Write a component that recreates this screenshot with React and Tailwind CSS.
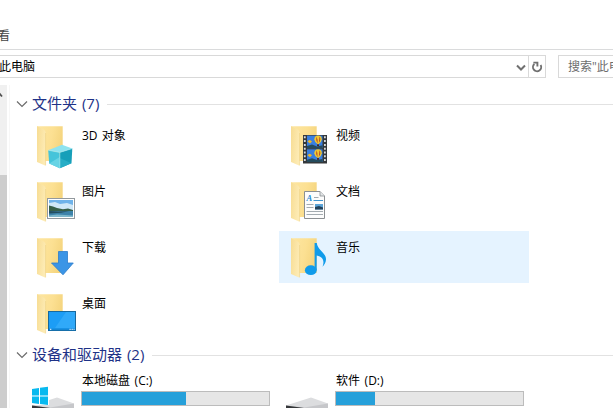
import React from 'react';

const Folder = ({ id, children }) => (
  <svg className="h-12 w-12 shrink-0" viewBox="0 0 48 48">
    <defs>
      <linearGradient id={`back-${id}`} x1="0" y1="0" x2="1" y2="0.3">
        <stop offset="0" stopColor="#fde6a2" />
        <stop offset="0.6" stopColor="#fce092" />
        <stop offset="1" stopColor="#f5d57f" />
      </linearGradient>
      <linearGradient id={`flap-${id}`} x1="0" y1="0" x2="1" y2="0.4">
        <stop offset="0" stopColor="#f7dc92" />
        <stop offset="1" stopColor="#fdebb4" />
      </linearGradient>
    </defs>
    <path d="M4 5.3H29.7V40H12L4 38Z" fill={`url(#back-${id})`} />
    <path d="M4 5.3L10.6 8.5Q12.6 9.6 12.6 11.5V44.8L4 41Z" fill={`url(#flap-${id})`} />
    <path d="M12.6 12V44.3" stroke="#ecd084" strokeWidth="0.6" />
    {children}
  </svg>
);

const Cube = () => (
  <>
    <path d="M15.2 29.2L29 23.8L39.3 27.5L26.8 31.4Z" fill="#8ee3ef" />
    <path d="M15.2 29.2L26.8 31.4V47.3L16.2 42.5Z" fill="#45c4da" />
    <path d="M26.8 31.4L39.3 27.5L38.5 42.3L26.8 47.3Z" fill="#169fb9" />
    <path d="M16.2 42.5L26.8 36V47.3Z" fill="#67d4e5" />
    <path d="M26.8 37L38.5 42.3L26.8 47.3Z" fill="#27adc6" />
    <path d="M15.2 29.2L26.8 31.4L39.3 27.5M26.8 31.4V47" fill="none" stroke="#b4f0f6" strokeWidth="0.6" />
  </>
);

const Photo = () => (
  <>
    <rect x="14.5" y="21.5" width="27" height="20" fill="#fff" stroke="#92999e" />
    <rect x="16" y="23" width="24" height="17" fill="#6fb3ea" />
    <path d="M16 26L22 25L27 27L34 26L40 28V33H16Z" fill="#cfe8f8" />
    <path d="M16 28.5L20 29.5L24 31L30 32.3L35 31.6L40 33V34.5H16Z" fill="#376049" />
    <rect x="16" y="34" width="24" height="6" fill="#3d83aa" />
    <path d="M16 34L25 34.6L36 34.3L28 35.8L16 36.4Z" fill="#244e60" />
    <path d="M16 38.6L24 37.5L40 38.5V40H16Z" fill="#7db7cb" />
  </>
);

const Arrow = () => (
  <path d="M25.5 18.5H34.5V30H40.3L30 41.8L18.5 30H25.5Z" fill="#3b95e6" stroke="#2b7ccb" strokeWidth="0.8" />
);

const Screen = () => (
  <>
    <rect x="15.5" y="22.5" width="27" height="19" fill="#1c9df6" stroke="#17699f" />
    <path d="M33 23H42V39H22Z" fill="#39aefb" opacity="0.7" />
    <rect x="16" y="39.5" width="26" height="1.7" fill="#1587d6" />
    <path d="M17 40.3H18.3M36.5 40.3H37.7M38.6 40.3H39.8M40.6 40.3H41.5" stroke="#fff" />
  </>
);

const Frame = ({ y }) => (
  <g transform={`translate(0 ${y})`}>
    <rect x="20" y="0" width="15.5" height="12.6" fill="#397fe0" />
    <path d="M20 10.4L25 9L30 10.8L35.5 9.6V12.6H20Z" fill="#244b5d" />
    <path d="M27.3 4Q27.5 0 31 0Q34.8 0 34.8 4Q34.5 6.5 31.7 8.5H30.5Q27.5 6.5 27.3 4Z" fill="#f1c92f" />
    <path d="M29.4 1Q31 3.5 30.5 8Q28.5 5 29.4 1M32.5 1Q34.5 4 31.8 7.5Z" fill="#b4472f" />
    <path d="M20.5 6Q22.5 3 25 6L23 8Z" fill="#eab72c" />
    <rect x="30" y="8.8" width="2" height="1.7" fill="#4c2722" />
  </g>
);

const Film = () => (
  <>
    <rect x="16" y="14" width="24" height="28.5" fill="#34383b" />
    <Frame y={14.6} />
    <Frame y={28.3} />
    <path d="M17.8 15.3V42M37.9 15.3V42" stroke="#d7dcdf" strokeWidth="1.8" strokeDasharray="2 1.8" />
  </>
);

const Doc = () => (
  <>
    <path d="M17.5 14.5H33L37.5 19V41.5H17.5Z" fill="#fcfcfc" stroke="#8b8f92" />
    <path d="M33 14.5V19H37.5" fill="#e2e5e7" stroke="#8b8f92" strokeWidth="0.8" />
    <text x="19.6" y="24" fontSize="8.5" fontWeight="bold" fontStyle="italic" fontFamily="Liberation Serif, serif" fill="#1f88cf">A</text>
    <path d="M27 20.5H31.5M19.5 27.5H26.5M19.5 30.5H26.5M19.5 34.5H36M19.5 37.5H36" stroke="#a3abb0" />
    <path d="M26.5 23.5H36" stroke="#3f95cf" />
    <rect x="28" y="27" width="8" height="5.5" fill="#5ba4d8" />
    <path d="M28 30L32 29L36 30.5V32.5H28Z" fill="#22415a" />
  </>
);

const Note = () => (
  <>
    <ellipse cx="23.8" cy="37.2" rx="5.9" ry="4.9" fill="#109bea" />
    <path d="M27.6 10H29.8C30.4 17.2 39.2 19.5 39 26.5C38.8 29.7 37.4 31.8 35.5 33.8C37.5 28.5 36.7 23.8 29.7 22.4V37H27.6Z" fill="#109bea" />
  </>
);

const folders = [
  { name: '3D 对象', icon: <Cube /> },
  { name: '视频', icon: <Film /> },
  { name: '图片', icon: <Photo /> },
  { name: '文档', icon: <Doc /> },
  { name: '下载', icon: <Arrow /> },
  { name: '音乐', icon: <Note />, active: true },
  { name: '桌面', icon: <Screen /> },
];

const drives = [
  { name: '本地磁盘 (C:)', used: 104, system: true },
  { name: '软件 (D:)', used: 39 },
];

const SectionHeader = ({ title }) => (
  <div className="flex h-5 items-center">
    <svg className="mr-[4px] h-3 w-3 shrink-0" viewBox="0 0 12 12" fill="none" stroke="#6c6c6c" strokeWidth="1.2">
      <path d="M1 3.5L6 8.5L11 3.5" />
    </svg>
    <h2 className="-mt-[2px] whitespace-nowrap text-[15px] leading-5 text-[#1e3287] [word-spacing:1px]">{title}</h2>
    <div className="ml-2 h-px flex-1 bg-[#e2e2e2]" />
  </div>
);

const FolderTile = ({ id, name, icon, active }) => (
  <div className={`flex h-[52px] w-[250px] pl-2 pt-[2px] ${active ? 'bg-[#e5f3ff]' : ''}`}>
    <Folder id={id}>{icon}</Folder>
    <span className="ml-px mt-[6px] text-xs leading-[18px] text-black [word-spacing:1px]">{name}</span>
  </div>
);

const DriveTile = ({ name, used, system }) => (
  <div className="flex w-[250px] pl-[7px]">
    <svg className="h-12 w-[49px] shrink-0" viewBox="0 0 49 48">
      <path d="M0 32.5L25 24.5L42 30.5V48H0Z" fill="#dcdddf" />
      <path d="M0 32.5L18 34.5L42 30.5V48H0Z" fill="#c6c7ca" />
      <path d="M0 32.5L18 35V48H0Z" fill="#35373a" />
      {system && (
        <>
          <path d="M-1 13H17V32H-1Z" fill="#fff" />
          <path d="M0 16L7 15V22.6H0ZM8 14.8L16 13.8V22.6H8ZM0 23.6H7V31L0 30ZM8 23.6H16V32L8 31Z" fill="#08b9ef" />
        </>
      )}
    </svg>
    <div className="shrink-0">
      <div className="-mt-px mb-px ml-px h-[18px] text-xs leading-[18px] text-black [word-spacing:1.5px]">{name}</div>
      <div className="h-[15px] w-[189px] border border-[#bcbcbc] bg-[#e6e6e6]">
        <div className="h-full bg-[#26a0da]" style={{ width: used }} />
      </div>
    </div>
  </div>
);

export default function App() {
  return (
    <div className="flex h-[408px] w-[613px] flex-col overflow-hidden bg-white font-['Open_Sans','Noto_Sans_CJK_SC',sans-serif]">
      <div className="flex h-[50px] items-end border-b border-[#dadbdc] pb-[4px]">
        <span className="-ml-[2px] text-xs leading-[18px] text-[#444]">看</span>
      </div>

      <div className="mt-[5px] flex h-[23px] shrink-0">
        <div className="flex w-[546px] items-center border-y border-r border-[#d9d9d9]">
          <span className="-ml-px flex-1 text-xs leading-[18px] text-black">此电脑</span>
          <svg className="mr-px h-3 w-3" viewBox="0 0 12 12" fill="none" stroke="#707070" strokeWidth="2">
            <path d="M2 4.5L6 8.5L10 4.5" />
          </svg>
          <div className="flex h-full w-[17px] items-center justify-center border-l border-[#d9d9d9]">
            <svg className="h-3 w-3" viewBox="0 0 12 12" fill="none" stroke="#707070" strokeWidth="1.9">
              <path d="M3.4 3A4.1 4.1 0 1 0 9.6 4" />
              <path d="M2.4 1.6H6.4V5.6" />
            </svg>
          </div>
        </div>
        <div className="ml-3 flex flex-1 items-center overflow-hidden border-y border-l border-[#d9d9d9] pl-[9px]">
          <span className="mt-px whitespace-nowrap text-xs leading-[18px] text-[#6d6d6d]">搜索"此电脑"</span>
        </div>
      </div>

      <div className="mt-[7px] flex min-h-0 flex-1">
        <div className="flex w-[7px] shrink-0 flex-col bg-[#f0f0f0]">
          <svg className="mt-[6px] h-2 w-[7px]" viewBox="0 0 7 8" fill="none" stroke="#505050" strokeWidth="1.8">
            <path d="M-3 5.5L-0.5 2.5L2 5.5" />
          </svg>
          <div className="mt-[76px] flex-1 bg-[#cdcdcd]" />
        </div>
        <div className="ml-[2px] flex-1 border-l border-[#f7f7f7] pl-[6px] pt-[9px]">
          <SectionHeader title="文件夹 (7)" />
          <div className="ml-[9px] mt-[5px] grid grid-cols-[250px_250px] gap-1">
            {folders.map((folder, i) => (
              <FolderTile key={folder.name} id={i} {...folder} />
            ))}
          </div>
          <div className="mt-[6px]">
            <SectionHeader title="设备和驱动器 (2)" />
          </div>
          <div className="ml-[9px] mt-[8px] grid grid-cols-[250px_250px] gap-1">
            {drives.map((drive) => (
              <DriveTile key={drive.name} {...drive} />
            ))}
          </div>
        </div>
      </div>
    </div>
  );
}
